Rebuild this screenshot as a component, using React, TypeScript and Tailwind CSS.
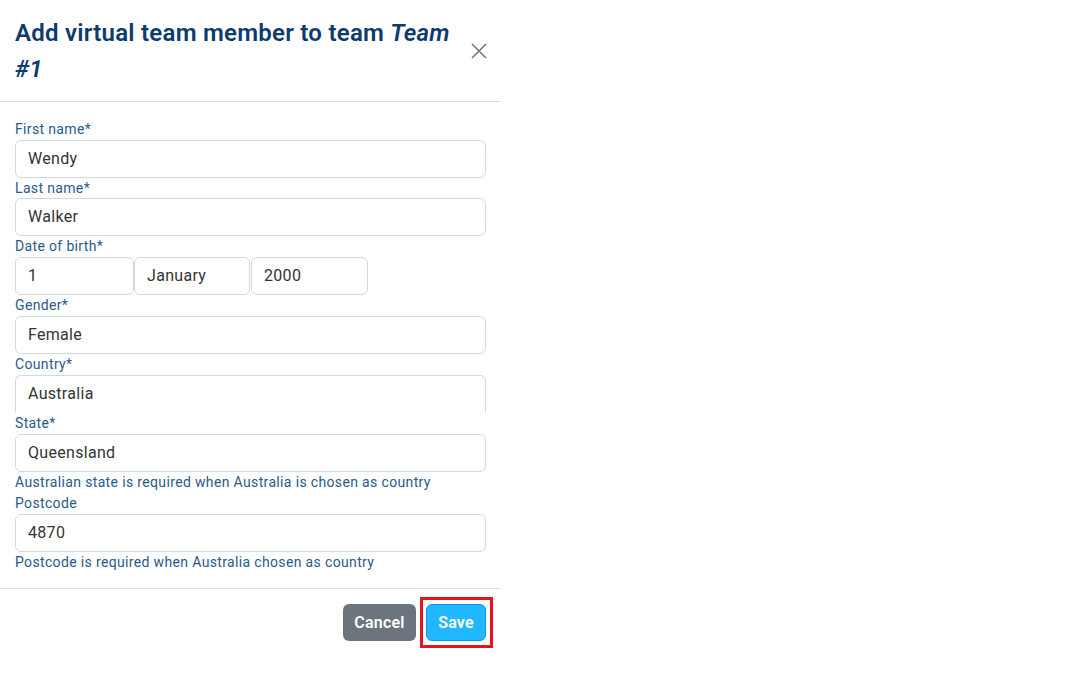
import React from "react";

const font = { fontFamily: "Roboto, 'Open Sans', sans-serif" };

function Label({ children, className = "leading-[21px]" }: { children: React.ReactNode; className?: string }) {
  return <div className={`text-[14px] tracking-[0.35px] text-[#2a5a8c] ${className}`}>{children}</div>;
}

function Input({ value, className = "w-full" }: { value: string; className?: string }) {
  return (
    <div
      className={`h-[38px] rounded-[6px] border border-[#d3d8de] bg-white pl-[12px] flex items-center text-[16px] tracking-[0.3px] text-[#343434] ${className}`}
    >
      {value}
    </div>
  );
}

export default function App() {
  return (
    <div className="w-[1080px] h-[691px] bg-white overflow-hidden" style={font}>
      <div className="w-[501px] bg-white">
        <div className="flex items-start justify-between pl-[15px] pr-[14px] pt-[15px] pb-[14px] border-b border-[#dee2e6]">
          <h5 className="text-[24px] leading-[36px] font-semibold tracking-[0.25px] text-[#0d3b6e]">
            Add virtual team member to team <em>Team</em>
            <br />
            <em>#1</em>
          </h5>
          <button className="mt-[28px] w-[16px] h-[16px] flex items-center justify-center">
            <svg width="16" height="16" viewBox="0 0 16 16">
              <path d="M1 1 L15 15 M15 1 L1 15" stroke="#7a7a7a" strokeWidth="1.6" />
            </svg>
          </button>
        </div>
        <div className="pt-[16px] pb-[15px] px-[15px]">
          <Label className="leading-[22px]">First name*</Label>
          <Input value="Wendy" />
          <Label className="leading-[20px]">Last name*</Label>
          <Input value="Walker" />
          <Label>Date of birth*</Label>
          <div className="flex">
            <Input value="1" className="w-[119px]" />
            <Input value="January" className="w-[116px]" />
            <Input value="2000" className="w-[117px] ml-px" />
          </div>
          <Label>Gender*</Label>
          <Input value="Female" />
          <Label>Country*</Label>
          <Input value="Australia" className="w-full border-b-transparent rounded-b-none" />
          <Label>State*</Label>
          <Input value="Queensland" />
          <Label>Australian state is required when Australia is chosen as country</Label>
          <Label>Postcode</Label>
          <Input value="4870" />
          <Label>Postcode is required when Australia chosen as country</Label>
        </div>
        <div className="border-t border-[#dee2e6] px-[15px] pt-[15px] pb-[15px] flex justify-end gap-[10px]">
          <button className="h-[37px] w-[73px] rounded-[6px] bg-[#6c757d] text-white text-[16px] font-semibold tracking-[0.2px]">
            Cancel
          </button>
          <div className="relative">
            <button className="h-[37px] w-[60px] rounded-[6px] bg-[#22b8ff] border border-[#0b98ec] text-white text-[16px] font-semibold tracking-[0.2px]">
              Save
            </button>
            <div className="absolute -top-[7px] -bottom-[7px] -left-[6px] -right-[7px] border-[3px] border-[#e3151f] pointer-events-none" />
          </div>
        </div>
      </div>
    </div>
  );
}
